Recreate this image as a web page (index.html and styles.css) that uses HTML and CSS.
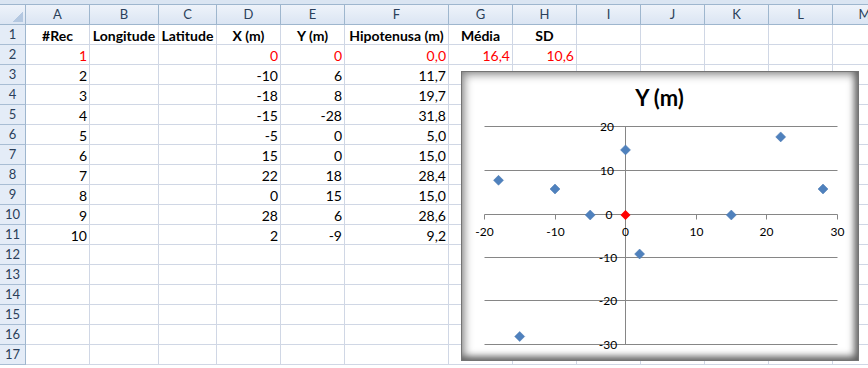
FILE: index.html
```html
<!DOCTYPE html>
<html lang="pt">
<head>
  <meta charset="UTF-8" />
  <title>Planilha - Y (m)</title>
  <link rel="stylesheet" href="styles.css">
</head>
<body>
  <div class="band"></div>
  <div class="sheet" id="sheet"></div>

  <div class="chart">
    <svg width="398" height="290" viewBox="461 71 398 290">
      <defs>
        <filter id="soft" x="-50%" y="-10%" width="200%" height="120%">
          <feGaussianBlur stdDeviation="1.6" />
        </filter>
      </defs>
      <text class="ttl" x="659.5" y="106" text-anchor="middle">Y (m)</text>

      <!-- grid lines -->
      <g class="grid">
        <line x1="484.5" y1="126.5" x2="837.5" y2="126.5" />
        <line x1="484.5" y1="170.5" x2="837.5" y2="170.5" />
        <line x1="484.5" y1="257.5" x2="837.5" y2="257.5" />
        <line x1="484.5" y1="300.5" x2="837.5" y2="300.5" />
        <line x1="484.5" y1="344.5" x2="837.5" y2="344.5" />
      </g>

      <!-- axis shadow -->
      <line class="shadow" x1="622" y1="128" x2="622" y2="346" filter="url(#soft)" />

      <!-- axes -->
      <g class="grid">
        <line x1="484.5" y1="214.5" x2="837.5" y2="214.5" />
        <line x1="625.5" y1="126.5" x2="625.5" y2="344.5" />
        <line x1="484.5" y1="214.5" x2="484.5" y2="219.5" />
        <line x1="555.5" y1="214.5" x2="555.5" y2="219.5" />
        <line x1="625.5" y1="214.5" x2="625.5" y2="219.5" />
        <line x1="696.5" y1="214.5" x2="696.5" y2="219.5" />
        <line x1="766.5" y1="214.5" x2="766.5" y2="219.5" />
        <line x1="837.5" y1="214.5" x2="837.5" y2="219.5" />
      </g>

      <!-- axis labels -->
      <g class="ax" text-anchor="middle">
        <text x="607" y="131">20</text>
        <text x="607" y="175">10</text>
        <text x="609" y="219">0</text>
        <text x="608" y="262">-10</text>
        <text x="608" y="305">-20</text>
        <text x="608" y="349">-30</text>

        <text x="484.5" y="236">-20</text>
        <text x="555.5" y="236">-10</text>
        <text x="625.5" y="236">0</text>
        <text x="696.5" y="236">10</text>
        <text x="766.5" y="236">20</text>
        <text x="837.5" y="236">30</text>
      </g>

      <!-- data points -->
      <g class="pt">
        <polygon points="555,184 560,189 555,194 550,189" />
        <polygon points="498.5,175.3 503.5,180.3 498.5,185.3 493.5,180.3" />
        <polygon points="519.7,331.5 524.7,336.5 519.7,341.5 514.7,336.5" />
        <polygon points="590.2,210 595.2,215 590.2,220 585.2,215" />
        <polygon points="731.3,210 736.3,215 731.3,220 726.3,215" />
        <polygon points="780.7,131.9 785.7,136.9 780.7,141.9 775.7,136.9" />
        <polygon points="625.5,144.9 630.5,149.9 625.5,154.9 620.5,149.9" />
        <polygon points="823,184 828,189 823,194 818,189" />
        <polygon points="639.6,249 644.6,254 639.6,259 634.6,254" />
      </g>
      <polygon class="pt-red" points="625.5,210 630.5,215 625.5,220 620.5,215" />
    </svg>
  </div>

  <script>
    const sheet = document.getElementById('sheet');
    const letters = ['A','B','C','D','E','F','G','H','I','J','K','L','M'];

    // row 1 = bold titles, row 2 = red summary row, then the records
    const data = [
      ['#Rec', 'Longitude', 'Latitude', 'X (m)', 'Y (m)', 'Hipotenusa (m)', 'Média', 'SD'],
      ['1', '', '', '0', '0', '0,0', '16,4', '10,6'],
      ['2', '', '', '-10', '6', '11,7'],
      ['3', '', '', '-18', '8', '19,7'],
      ['4', '', '', '-15', '-28', '31,8'],
      ['5', '', '', '-5', '0', '5,0'],
      ['6', '', '', '15', '0', '15,0'],
      ['7', '', '', '22', '18', '28,4'],
      ['8', '', '', '0', '15', '15,0'],
      ['9', '', '', '28', '6', '28,6'],
      ['10', '', '', '2', '-9', '9,2']
    ];

    function cell(cls, text) {
      const d = document.createElement('div');
      d.className = cls;
      d.textContent = text || '';
      sheet.appendChild(d);
    }

    cell('corner');
    letters.forEach(l => cell('hd', l));

    for (let r = 1; r <= 17; r++) {
      cell('rh', r);
      const row = data[r - 1] || [];
      letters.forEach((l, i) => {
        let cls = 'cell';
        if (r === 1) cls += ' title';
        else if (r === 2) cls += ' num red';
        else cls += ' num';
        cell(cls, row[i]);
      });
    }
  </script>
</body>
</html>
```

FILE: styles.css
```css
* {
  box-sizing: border-box;
}
body {
  margin: 0;
  width: 868px;
  height: 368px;
  overflow: hidden;
  background: #fff;
  font-family: Lato, "Liberation Sans", sans-serif;
  position: relative;
}
.band {
  height: 5px;
  background: #dae5f2;
  border-bottom: 1px solid #9eb6ce;
}
.sheet {
  display: grid;
  grid-template-columns: 26px 64px 69px 58px 64px 64px 104px 64px 64px 64px 64px 64px 64px 64px;
  grid-auto-rows: 20px;
  width: 900px;
}
.corner,
.hd,
.rh {
  background: linear-gradient(#eef3fa, #dbe5f3);
  border-right: 1px solid #9eb6ce;
  border-bottom: 1px solid #9eb6ce;
  color: #2b3f5a;
  font-size: 13px;
  line-height: 19px;
  text-align: center;
}
.rh {
  background: #e4ecf7;
  border-bottom-color: #a8bdd4;
}
.corner {
  position: relative;
}
.corner::after {
  content: "";
  position: absolute;
  right: 2px;
  bottom: 2px;
  width: 10px;
  height: 10px;
  background: linear-gradient(135deg, transparent 50%, #b4c8e1 50%);
}
.cell {
  border-right: 1px solid #d0d7e5;
  border-bottom: 1px solid #d0d7e5;
  font-size: 14px;
  line-height: 19px;
  padding: 1px 2px 0;
  white-space: nowrap;
  overflow: hidden;
  color: #000;
}
.title {
  font-weight: bold;
  text-align: center;
}
.num {
  text-align: right;
}
.red {
  color: #ff0000;
}
.chart {
  position: absolute;
  left: 461px;
  top: 71px;
  width: 398px;
  height: 290px;
  background: #fff;
  border: 1px solid #747474;
  box-shadow: inset 0 0 9px 3px rgba(0, 0, 0, 0.42), inset -3px -3px 6px rgba(0, 0, 0, 0.38);
  overflow: hidden;
}
.chart svg {
  display: block;
  margin: -1px;
}
.ttl {
  font: bold 22px Lato, "Liberation Sans", sans-serif;
  fill: #000;
}
.ax {
  font: 12px Lato, "Liberation Sans", sans-serif;
  fill: #000;
}
.grid line {
  stroke: #868686;
  stroke-width: 1;
}
.shadow {
  stroke: #000;
  stroke-opacity: 0.18;
  stroke-width: 4;
}
.pt polygon {
  fill: #4f81bd;
  stroke: #4a78b0;
  stroke-width: 0.5;
}
.pt-red {
  fill: #ff0000;
}
```
